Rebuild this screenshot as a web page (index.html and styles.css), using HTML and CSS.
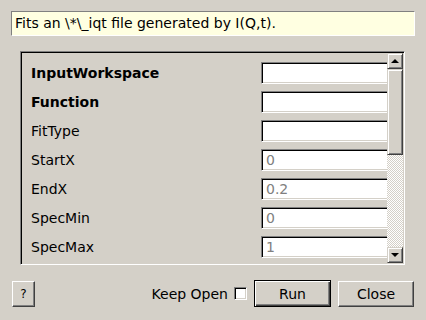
FILE: index.html
```html
<!DOCTYPE html>
<html lang="en">
<head>
    <meta charset="UTF-8">
    <title>IqtFit</title>
    <link rel="stylesheet" href="styles.css">
</head>
<body>
    <div class="desc">Fits an \*\_iqt file generated by I(Q,t).</div>

    <div class="frame">
        <div class="viewport">
            <div class="row"><span class="label bold">InputWorkspace</span><span class="field"></span></div>
            <div class="row"><span class="label bold">Function</span><span class="field"></span></div>
            <div class="row"><span class="label">FitType</span><span class="field"></span></div>
            <div class="row"><span class="label">StartX</span><span class="field">0</span></div>
            <div class="row"><span class="label">EndX</span><span class="field">0.2</span></div>
            <div class="row"><span class="label">SpecMin</span><span class="field">0</span></div>
            <div class="row"><span class="label">SpecMax</span><span class="field">1</span></div>
        </div>
        <div class="scrollbar">
            <div class="sb-btn"><span class="arrow up"></span></div>
            <div class="sb-thumb"></div>
            <div class="sb-track"></div>
            <div class="sb-btn"><span class="arrow down"></span></div>
        </div>
    </div>

    <div class="footer">
        <button class="btn help">?</button>
        <div class="spacer"></div>
        <span class="keep">Keep Open</span>
        <span class="check"></span>
        <button class="btn run">Run</button>
        <button class="btn close">Close</button>
    </div>
</body>
</html>
```

FILE: styles.css
```css
body {
    margin: 0;
    width: 426px;
    height: 320px;
    background: #d4d0c8;
    font-family: "DejaVu Sans", sans-serif;
    font-size: 14px;
    color: #000;
    overflow: hidden;
}
.desc {
    margin: 11px 11px 0 11px;
    height: 23px;
    line-height: 23px;
    padding-left: 3px;
    background: #ffffe1;
    border: 1px solid;
    border-color: #808080 #fff #fff #808080;
}
.frame {
    display: flex;
    margin: 15px 0 0 20px;
    width: 381px;
    height: 210px;
    border: 1px solid;
    border-color: #808080 #fff #fff #808080;
    box-shadow: inset 1px 1px #000, inset -1px -1px #d4d0c8;
    padding: 1px;
}
.viewport {
    flex: 1;
    overflow: hidden;
    padding: 9px 0 0 9px;
}
.row {
    display: flex;
    align-items: center;
    height: 22px;
    margin-bottom: 7px;
}
.label {
    width: 230px;
    flex-shrink: 0;
}
.bold {
    font-weight: bold;
}
.field {
    flex-shrink: 0;
    box-sizing: border-box;
    width: 150px;
    height: 22px;
    line-height: 20px;
    padding-left: 4px;
    background: #fff;
    color: #808080;
    border: 1px solid;
    border-color: #808080 #fff #fff #808080;
    box-shadow: inset 1px 1px #000, inset -1px -1px #d4d0c8;
}
.scrollbar {
    width: 16px;
    display: flex;
    flex-direction: column;
}
.sb-btn, .sb-thumb {
    box-sizing: border-box;
    background: #d4d0c8;
    border: 1px solid;
    border-color: #d4d0c8 #404040 #404040 #d4d0c8;
    box-shadow: inset 1px 1px #fff, inset -1px -1px #808080;
}
.sb-btn {
    height: 16px;
    display: flex;
    align-items: center;
    justify-content: center;
}
.sb-thumb {
    height: 86px;
}
.sb-track {
    flex: 1;
    background: repeating-conic-gradient(#fff 0 25%, #d4d0c8 0 50%) 0 0 / 2px 2px;
}
.arrow {
    width: 0;
    height: 0;
    border-left: 4px solid transparent;
    border-right: 4px solid transparent;
}
.arrow.up {
    border-bottom: 4px solid #000;
}
.arrow.down {
    border-top: 4px solid #000;
}
.footer {
    display: flex;
    align-items: center;
    margin: 15px 12px 0 12px;
    height: 27px;
}
.spacer {
    flex: 1;
}
.btn {
    box-sizing: border-box;
    height: 26px;
    font-family: "DejaVu Sans", sans-serif;
    font-size: 14px;
    color: #000;
    background: #d4d0c8;
    padding: 0;
    border: 1px solid;
    border-color: #fff #404040 #404040 #fff;
    box-shadow: inset -1px -1px #808080;
}
.help {
    width: 23px;
    font-size: 12px;
}
.keep {
    margin-right: 6px;
}
.check {
    box-sizing: border-box;
    width: 13px;
    height: 13px;
    background: #fff;
    border: 1px solid;
    border-color: #808080 #fff #fff #808080;
    box-shadow: inset 1px 1px #000, inset -1px -1px #d4d0c8;
    margin-right: 7px;
}
.run {
    width: 77px;
    height: 27px;
    border-color: #000;
    box-shadow: inset 1px 1px #fff, inset -1px -1px #404040, inset -2px -2px #808080;
    margin-right: 7px;
}
.close {
    width: 76px;
}
```
